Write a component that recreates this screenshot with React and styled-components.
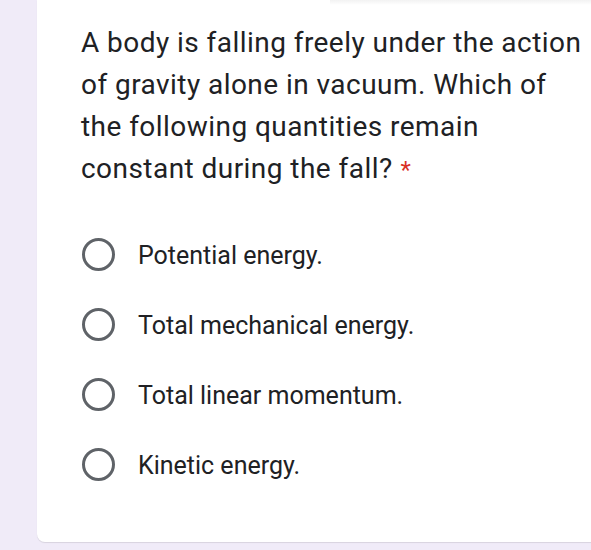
import React from "react";
import styled, { createGlobalStyle } from "styled-components";

const Global = createGlobalStyle`
  html, body { margin: 0; padding: 0; background: #f0ebf8; }
  body { font-family: Roboto, "Noto Sans", Arial, sans-serif; }
`;

const Page = styled.div`
  width: 591px;
  height: 550px;
  overflow: hidden;
  padding: 0 0 8px 37px;
  box-sizing: border-box;
  position: relative;
`;

const TopShade = styled.div`
  position: absolute;
  top: 0;
  left: 330px;
  right: 0;
  height: 5px;
  background: linear-gradient(to bottom, rgba(0,0,0,0.05), rgba(0,0,0,0));
`;

const Card = styled.div`
  background: #fff;
  margin-right: -20px;
  height: 542px;
  border-radius: 0 0 8px 8px;
  box-shadow: 0 1px 1px rgba(0,0,0,0.1);
  padding: 22px 0 0 44px;
  box-sizing: border-box;
`;

const Question = styled.div`
  font-size: 28px;
  line-height: 42px;
  color: #202124;
  letter-spacing: 0.45px;
  white-space: nowrap;
`;

const Required = styled.span`
  color: #d93025;
  margin-left: 8px;
  font-size: 24px;
`;

const Options = styled.div`
  display: flex;
  flex-direction: column;
  margin-top: 28px;
`;

const Option = styled.label`
  display: flex;
  align-items: center;
  height: 70px;
  padding-left: 1px;
  gap: 23px;
`;

const Radio = styled.span`
  width: 33px;
  height: 33px;
  box-sizing: border-box;
  border-radius: 50%;
  border: 3px solid #5f6368;
  flex: none;
`;

const OptionText = styled.span`
  font-size: 25px;
  color: #202124;
  padding-top: 3px;
`;

const options = [
  "Potential energy.",
  "Total mechanical energy.",
  "Total linear momentum.",
  "Kinetic energy.",
];

export default function App() {
  return (
    <>
      <Global />
      <Page>
        <TopShade />
        <Card>
          <Question>
            A body is falling freely under the action
            <br />
            of gravity alone in vacuum. Which of
            <br />
            the following quantities remain
            <br />
            constant during the fall?
            <Required>*</Required>
          </Question>
          <Options>
            {options.map((o) => (
              <Option key={o}>
                <Radio />
                <OptionText>{o}</OptionText>
              </Option>
            ))}
          </Options>
        </Card>
      </Page>
    </>
  );
}
